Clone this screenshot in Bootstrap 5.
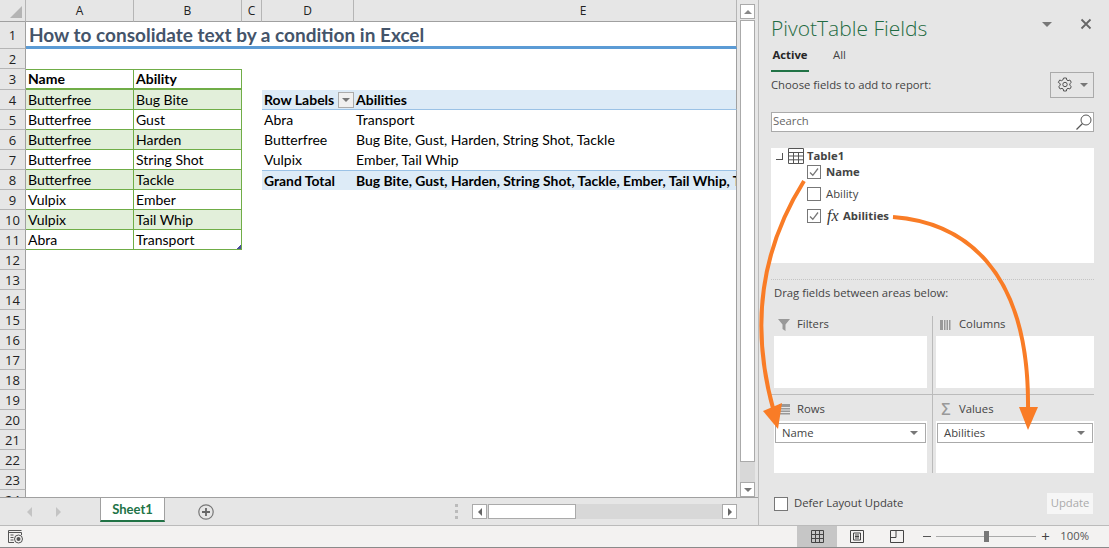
<!DOCTYPE html>
<html lang="en">
<head>
  <meta charset="UTF-8">
  <title>Consolidate text by a condition</title>
  <link href="https://cdn.jsdelivr.net/npm/bootstrap@5.3.0/dist/css/bootstrap.min.css" rel="stylesheet">
  <style>
    html, body { width: 1109px; height: 548px; overflow: hidden; background: #e6e6e6; }
    body { font-family: "Open Sans", "Liberation Sans", sans-serif; font-size: 11.3px; color: #444; }

    .main-area { height: 525px; }
    .sheet-pane { width: 759px; border-right: 1px solid #bbb; }
    .grid-wrap { height: 497px; }
    .grid-clip { width: 737px; height: 497px; overflow: hidden; }

    .xl { table-layout: fixed; width: 737px; border-collapse: separate; border-spacing: 0; font-family: Lato, "Liberation Sans", sans-serif; font-size: 14px; color: #000; }
    .xl td, .xl th { height: 20px; padding: 0 2px; line-height: 18px; vertical-align: middle; white-space: nowrap; overflow: hidden; font-weight: 400; background: #fff; }
    .xl .col-head { height: 22px; background: #e6e6e6; color: #222; text-align: center; font-family: "Open Sans", sans-serif; font-size: 12px; border-right: 1px solid #b5b5b5; border-bottom: 1px solid #a0a0a0; padding: 0; }
    .xl .col-wide { padding-left: 76px; }
    .xl .row-head { background: #e6e6e6; color: #222; text-align: center; font-family: "Open Sans", sans-serif; font-size: 13px; border-right: 1px solid #a0a0a0; border-bottom: 1px solid #b5b5b5; padding: 0; }
    .xl .corner { position: relative; }
    .corner-tri { position: absolute; right: 3px; bottom: 3px; width: 0; height: 0; border-left: 12px solid transparent; border-bottom: 12px solid #b4b4b4; }
    .xl .edge { border-right: 1px solid #a0a0a0; }
    .xl .title-row { height: 27px; }
    .xl .title-cell { font-size: 19px; font-weight: 700; color: #44546a; border-bottom: 3px solid #5b9bd5; border-right: 1px solid #a0a0a0; padding: 2px 0 0 3px; }

    .xl .src { border-right: 1px solid #70ad47; border-bottom: 1px solid #70ad47; }
    .xl .src-top { border-top: 1px solid #70ad47; font-weight: 700; border-bottom-width: 2px; height: 21px; }
    .xl .src-odd { background: #e2efda; }
    .xl .src-last { position: relative; }
    .resize-mark { position: absolute; right: 0; bottom: 0; width: 4px; height: 4px; background: linear-gradient(135deg, transparent 50%, #4a4f9c 50%); }

    .xl .pv-head { background: #ddebf7; font-weight: 700; border-bottom: 1px solid #9bc2e6; }
    .xl .pv-label { padding-right: 0; }
    .xl .pv-total { background: #ddebf7; font-weight: 700; border-top: 1px solid #9bc2e6; font-size: 13.9px; }
    .pv-filter { width: 16px; height: 16px; background: #f0f0f0; border: 1px solid #ababab; }
    .tri-down { width: 0; height: 0; border-left: 4px solid transparent; border-right: 4px solid transparent; border-top: 4px solid #777; }
    .tri-menu { border-left-width: 5px; border-right-width: 5px; border-top-width: 5px; }
    .tri-up { width: 0; height: 0; border-left: 4px solid transparent; border-right: 4px solid transparent; border-bottom: 4px solid #888; }
    .tri-left { width: 0; height: 0; border-top: 4px solid transparent; border-bottom: 4px solid transparent; border-right: 4px solid #666; }
    .tri-right { width: 0; height: 0; border-top: 4px solid transparent; border-bottom: 4px solid transparent; border-left: 4px solid #666; }

    .vscroll { width: 15px; margin-left: 3px; padding-top: 4px; }
    .sb-btn { background: #fff; border: 1px solid #aaa; flex: none; }
    .vscroll .sb-btn { height: 15px; }
    .vthumb { height: 442px; background: #fff; border: 1px solid #aaa; margin-top: 1px; }
    .vtrack { background: #d8d8d8; }

    .tab-bar { height: 28px; border-top: 1px solid #a0a0a0; }
    .tab-nav { width: 100px; padding-left: 27px; gap: 24px; }
    .tri-dim-l { width: 0; height: 0; border-top: 5px solid transparent; border-bottom: 5px solid transparent; border-right: 5px solid #c4c4c4; }
    .tri-dim-r { width: 0; height: 0; border-top: 5px solid transparent; border-bottom: 5px solid transparent; border-left: 5px solid #c4c4c4; }
    .sheet-tab { width: 65px; height: 25px; margin-top: -1px; padding-top: 2px; background: #fff; border: 1px solid #a0a0a0; border-bottom: 2px solid #217346; color: #217346; font-weight: 700; font-size: 13px; font-family: Lato, sans-serif; }
    .add-sheet { margin-left: 33px; }
    .tab-dots { margin-left: auto; width: 3px; gap: 3px; margin-right: 14px; }
    .tab-dots span { height: 3px; background: #bbb; }
    .hscroll { width: 265px; height: 15px; margin-right: 21px; background: #d8d8d8; }
    .hscroll .sb-btn { width: 15px; height: 15px; }
    .hthumb { width: 88px; background: #fff; border: 1px solid #aaa; margin-left: 1px; }

    .field-panel { flex: 1; padding: 0 15px 0 12px; }
    .panel-title { font-size: 21px; line-height: 24px; margin-top: 16px; color: #1f6b42; font-weight: 300; }
    .panel-tools { margin-top: 18px; padding-right: 2px; gap: 28px; }
    .tabs-row { margin-top: 6px; height: 26px; }
    .tab-active { color: #262626; font-weight: 700; width: 38px; border-bottom: 2px solid #217346; text-align: center; height: 26px; line-height: 18px; }
    .tab-plain { margin-left: 24px; line-height: 18px; }
    .choose-row { height: 26px; }
    .gear-btn { width: 44px; height: 26px; border: 1px solid #aaa; gap: 7px; }
    .search-box { margin-top: 14px; height: 20px; background: #fff; border: 1px solid #aaa; padding-left: 1px; color: #666; line-height: 15px; }
    .field-tree { margin-top: 16px; height: 115px; background: #fff; padding-left: 5px; }
    .tree-root { height: 16px; color: #444; font-weight: 700; }
    .tree-elbow { width: 7px; height: 7px; border-right: 1px solid #555; border-bottom: 1px solid #555; margin-right: 5px; }
    .tree-table-icon { margin-right: 3px; }
    .tree-item { height: 22px; margin-left: 31px; gap: 5px; }
    .tree-item.first-item { height: 16px; margin-bottom: 3px; }
    .tree-item.calc-item { gap: 1px; }
    .chk { width: 14px; height: 14px; border: 1px solid #777; background: #fff; flex: none; }
    .tree-item.calc-item .chk { margin-right: 5px; }
    .fx-mark { font-family: "Liberation Serif", serif; font-style: italic; font-weight: 400; font-size: 16px; color: #333; width: 15px; }
    .drag-rule { margin-top: 16px; border-top: 1px dotted #c4c4c4; }
    .drag-label { height: 20px; margin-top: 4px; margin-left: 3px; line-height: 17px; }
    .areas { margin-top: 12px; display: grid; grid-template-columns: 162px 161px; }
    .area-cell { height: 78px; padding: 0 5px 0 3px; }
    .area-cell.top-cell { border-bottom: 1px solid #bbb; height: 79px; padding-bottom: 6px; }
    .area-cell.left-cell { border-right: 1px solid #bbb; }
    .area-cell.right-cell { padding-right: 0; }
    .area-label { height: 20px; gap: 6px; color: #444; margin-left: 3px; padding-bottom: 3px; }
    .area-label.low-label { height: 26px; padding: 2px 0 0; }
    .area-box { height: 52px; background: #fff; padding: 2px 1px; }
    .area-field { height: 20px; border: 1px solid #aaa; padding: 0 7px 0 6px; background: #fff; }
    .area-icon { width: 14px; }
    .sigma { color: #999; font-size: 16px; font-weight: 600; line-height: 1; text-align: center; }
    .defer-row { margin-top: 20px; height: 21px; padding-left: 3px; gap: 6px; }
    .update-btn { margin-left: auto; margin-right: 1px; width: 46px; height: 21px; background: #f6f6f6; color: #aaa; }

    .status-bar { height: 23px; background: #f3f2f1; border-top: 1px solid #bbb; border-bottom: 1px solid #8a8a8a; }
    .status-left { margin-left: 8px; }
    .view-btn { width: 40px; height: 100%; }
    .view-btn.on { background: #c6c6c6; }
    .zoom-minus { margin-left: 6px; width: 8px; height: 1px; background: #555; }
    .zoom-track { width: 100px; height: 1px; background: #aaa; margin-left: 5px; position: relative; }
    .zoom-thumb { position: absolute; left: 48px; top: -5px; width: 5px; height: 11px; background: #777; }
    .zoom-plus { margin-left: 5px; font-size: 15px; color: #444; width: 12px; }
    .zoom-pct { margin-left: 7px; margin-right: 20px; color: #555; font-size: 11.3px; }

    .arrow-layer { position: absolute; left: 0; top: 0; width: 1109px; height: 548px; pointer-events: none; }
  </style>
</head>

<body class="position-relative">
  <div class="d-flex main-area">
    <div class="sheet-pane d-flex flex-column">
      <div class="d-flex grid-wrap">
        <div class="grid-clip">
          <table class="xl">
            <colgroup>
              <col style="width:26px"><col style="width:108px"><col style="width:108px"><col style="width:20px"><col style="width:92px"><col style="width:383px">
            </colgroup>
            <tbody id="gridBody">
              <tr>
                <td class="col-head corner"><div class="corner-tri"></div></td>
                <td class="col-head">A</td>
                <td class="col-head">B</td>
                <td class="col-head">C</td>
                <td class="col-head">D</td>
                <td class="col-head col-wide">E</td>
              </tr>
              <tr>
                <td class="row-head title-row">1</td>
                <td class="title-cell title-row" colspan="5">How to consolidate text by a condition in Excel</td>
              </tr>
            </tbody>
          </table>
        </div>
        <div class="vscroll d-flex flex-column">
          <div class="sb-btn d-flex align-items-center justify-content-center"><div class="tri-up"></div></div>
          <div class="vthumb"></div>
          <div class="vtrack flex-grow-1"></div>
          <div class="sb-btn d-flex align-items-center justify-content-center"><div class="tri-down"></div></div>
        </div>
      </div>
      <div class="tab-bar d-flex align-items-center">
        <div class="tab-nav d-flex align-items-center"><div class="tri-dim-l"></div><div class="tri-dim-r"></div></div>
        <div class="sheet-tab d-flex align-items-center justify-content-center align-self-start">Sheet1</div>
        <svg class="add-sheet" width="16" height="16" viewBox="0 0 16 16"><circle cx="8" cy="8" r="7.2" fill="none" stroke="#777" stroke-width="1.2"/><path d="M8 4v8M4 8h8" stroke="#666" stroke-width="1.8"/></svg>
        <div class="tab-dots d-flex flex-column"><span></span><span></span><span></span></div>
        <div class="hscroll d-flex">
          <div class="sb-btn d-flex align-items-center justify-content-center"><div class="tri-left"></div></div>
          <div class="hthumb"></div>
          <div class="flex-grow-1"></div>
          <div class="sb-btn d-flex align-items-center justify-content-center"><div class="tri-right"></div></div>
        </div>
      </div>
    </div>

    <div class="field-panel">
      <div class="d-flex justify-content-between">
        <div class="panel-title">PivotTable Fields</div>
        <div class="panel-tools d-flex align-items-start">
          <div class="tri-down tri-menu mt-1"></div>
          <svg width="12" height="12" viewBox="0 0 12 12"><path d="M1.5 1.5l9 9M10.5 1.5l-9 9" stroke="#666" stroke-width="1.8"/></svg>
        </div>
      </div>
      <div class="tabs-row d-flex">
        <div class="tab-active">Active</div>
        <div class="tab-plain">All</div>
      </div>
      <div class="choose-row d-flex align-items-center justify-content-between">
        <div>Choose fields to add to report:</div>
        <div class="gear-btn d-flex align-items-center justify-content-center">
          <svg width="16" height="16" viewBox="0 0 16 16"><path d="M6.6 1h2.8l.4 2 1.2.7 1.9-.7 1.4 2.4-1.5 1.3v1.6l1.5 1.3-1.4 2.4-1.9-.7-1.2.7-.4 2H6.600l-.4-2-1.200-.7-1.900.7-1.400-2.400 1.500-1.300V6.700L1.300 5.400l1.400-2.400 1.900.7 1.200-.7z" fill="none" stroke="#555"/><circle cx="8" cy="7.500" r="2.200" fill="none" stroke="#555"/></svg>
          <div class="tri-down"></div>
        </div>
      </div>
      <div class="search-box d-flex justify-content-between">
        <span>Search</span>
        <svg width="18" height="18" viewBox="0 0 18 18"><circle cx="11" cy="7" r="5" fill="none" stroke="#555"/><path d="M7.500 10.500L1.500 16.500" stroke="#555" stroke-width="1.200"/></svg>
      </div>
      <div class="field-tree">
        <div class="tree-root d-flex align-items-center">
          <div class="tree-elbow"></div>
          <svg class="tree-table-icon" width="16" height="16" viewBox="0 0 16 16"><path d="M.5.500h15v15H.5zM.5 4.500h15M.5 8h15M.5 11.800h15M5.500 4.500v11M10.500 4.500v11" fill="none" stroke="#555"/></svg>
          <span>Table1</span>
        </div>
        <div class="tree-item first-item d-flex align-items-center fw-bold">
          <div class="chk d-flex align-items-center justify-content-center"><svg width="10" height="10" viewBox="0 0 10 10"><path d="M1 5.500l2.800 2.800L9 1.500" fill="none" stroke="#777" stroke-width="1.300"/></svg></div>
          <span>Name</span>
        </div>
        <div class="tree-item d-flex align-items-center">
          <div class="chk"></div>
          <span>Ability</span>
        </div>
        <div class="tree-item calc-item d-flex align-items-center fw-bold">
          <div class="chk d-flex align-items-center justify-content-center"><svg width="10" height="10" viewBox="0 0 10 10"><path d="M1 5.500l2.800 2.800L9 1.500" fill="none" stroke="#777" stroke-width="1.300"/></svg></div>
          <span class="fx-mark">fx</span>
          <span>Abilities</span>
        </div>
      </div>
      <div class="drag-rule"></div>
      <div class="drag-label">Drag fields between areas below:</div>
      <div class="areas">
        <div class="area-cell top-cell left-cell">
          <div class="area-label d-flex align-items-center">
            <svg class="area-icon" width="12" height="12" viewBox="0 0 12 12"><path d="M0 0h12L7.500 5.500V12L4.500 10V5.500z" fill="#999"/></svg>
            <span>Filters</span>
          </div>
          <div class="area-box"></div>
        </div>
        <div class="area-cell top-cell right-cell">
          <div class="area-label d-flex align-items-center">
            <svg class="area-icon" width="12" height="12" viewBox="0 0 12 12"><path d="M0 1h3v10H0zM4 1h1.500v10H4zM6.500 1h1.500v10H6.500zM9 1h1.500v10H9z" fill="#999"/></svg>
            <span>Columns</span>
          </div>
          <div class="area-box"></div>
        </div>
        <div class="area-cell left-cell">
          <div class="area-label low-label d-flex align-items-center">
            <svg class="area-icon" width="12" height="12" viewBox="0 0 12 12"><path d="M1 1h11v3H1zM1 5h11v1.500H1zM1 7.500h11V9H1zM1 10h11v1.500H1z" fill="#999"/></svg>
            <span>Rows</span>
          </div>
          <div class="area-box">
            <div class="area-field d-flex align-items-center justify-content-between"><span>Name</span><div class="tri-down"></div></div>
          </div>
        </div>
        <div class="area-cell right-cell">
          <div class="area-label low-label d-flex align-items-center">
            <span class="area-icon sigma">Σ</span>
            <span>Values</span>
          </div>
          <div class="area-box">
            <div class="area-field d-flex align-items-center justify-content-between"><span>Abilities</span><div class="tri-down"></div></div>
          </div>
        </div>
      </div>
      <div class="defer-row d-flex align-items-center">
        <div class="chk"></div>
        <span>Defer Layout Update</span>
        <div class="update-btn d-flex align-items-center justify-content-center">Update</div>
      </div>
    </div>
  </div>

  <div class="status-bar d-flex align-items-center">
    <svg class="status-left" width="15" height="15" viewBox="0 0 15 15"><path d="M.5 1.500h13M.5 3.500h13V6M.5 1.500v12H6M2.500 6h3M2.500 8.500h3M2.500 11h3" fill="none" stroke="#555"/><circle cx="10.500" cy="10" r="4" fill="none" stroke="#555"/><circle cx="10.500" cy="10" r="2" fill="#555"/></svg>
    <div class="ms-auto view-btn on d-flex align-items-center justify-content-center">
      <svg width="13" height="13" viewBox="0 0 13 13"><path d="M.5.500h12v12H.5zM.5 4.500h12M.5 8.500h12M4.500.500v12M8.500.500v12" fill="none" stroke="#444"/></svg>
    </div>
    <div class="view-btn d-flex align-items-center justify-content-center">
      <svg width="14" height="13" viewBox="0 0 14 13"><path d="M.5.500h13v12H.5zM3.500 3h7v7h-7zM5 5h4M5 6.500h4M5 8h4" fill="none" stroke="#444"/></svg>
    </div>
    <div class="view-btn d-flex align-items-center justify-content-center">
      <svg width="14" height="13" viewBox="0 0 14 13"><path d="M.5.500h13v12H.5zM.5 7.500h5.500V.500" fill="none" stroke="#444"/></svg>
    </div>
    <div class="zoom-minus"></div>
    <div class="zoom-track"><div class="zoom-thumb"></div></div>
    <div class="zoom-plus lh-1">+</div>
    <div class="zoom-pct">100%</div>
  </div>

  <svg class="arrow-layer" viewBox="0 0 1109 548">
    <path d="M804 181C770 235 745 310 774 412" fill="none" stroke="#f97c26" stroke-width="4"/>
    <path d="M763 411L782 403L778 429z" fill="#f97c26"/>
    <path d="M893 217C960 222 1030 265 1028 410" fill="none" stroke="#f97c26" stroke-width="4"/>
    <path d="M1019 407H1038L1028 430z" fill="#f97c26"/>
  </svg>

<script src="https://cdn.jsdelivr.net/npm/bootstrap@5.3.0/dist/js/bootstrap.bundle.min.js"></script>
<script>
  // rows 2..24 of the sheet, keyed by row number
  let sourceRows = [
    ["Butterfree", "Bug Bite"], ["Butterfree", "Gust"], ["Butterfree", "Harden"], ["Butterfree", "String Shot"],
    ["Butterfree", "Tackle"], ["Vulpix", "Ember"], ["Vulpix", "Tail Whip"], ["Abra", "Transport"]
  ];
  let pivotRows = {
    5: ["Abra", "Transport"],
    6: ["Butterfree", "Bug Bite, Gust, Harden, String Shot, Tackle"],
    7: ["Vulpix", "Ember, Tail Whip"]
  };

  let html = "";
  for (let r = 2; r <= 24; r++) {
    let a = "<td></td>", b = "<td></td>", d = "<td></td>", e = '<td class="edge"></td>';
    if (r === 3) {
      a = '<td class="src src-top">Name</td>';
      b = '<td class="src src-top">Ability</td>';
    }
    if (r >= 4 && r <= 11) {
      let odd = r % 2 === 0 ? " src-odd" : "";
      a = `<td class="src${odd}">${sourceRows[r - 4][0]}</td>`;
      b = `<td class="src${odd}">${sourceRows[r - 4][1]}</td>`;
    }
    if (r === 11) {
      b = `<td class="src src-last">${sourceRows[7][1]}<div class="resize-mark"></div></td>`;
    }
    if (r === 4) {
      d = '<td class="pv-head pv-label"><div class="d-flex align-items-center justify-content-between">Row Labels<div class="pv-filter d-flex align-items-center justify-content-center"><div class="tri-down"></div></div></div></td>';
      e = '<td class="pv-head edge">Abilities</td>';
    }
    if (pivotRows[r]) {
      d = `<td>${pivotRows[r][0]}</td>`;
      e = `<td class="edge">${pivotRows[r][1]}</td>`;
    }
    if (r === 8) {
      d = '<td class="pv-total">Grand Total</td>';
      e = '<td class="pv-total edge">Bug Bite, Gust, Harden, String Shot, Tackle, Ember, Tail Whip, Transport</td>';
    }
    html += `<tr><td class="row-head">${r}</td>${a}${b}<td></td>${d}${e}</tr>`;
  }
  document.getElementById("gridBody").insertAdjacentHTML("beforeend", html);
</script>
</body>
</html>
